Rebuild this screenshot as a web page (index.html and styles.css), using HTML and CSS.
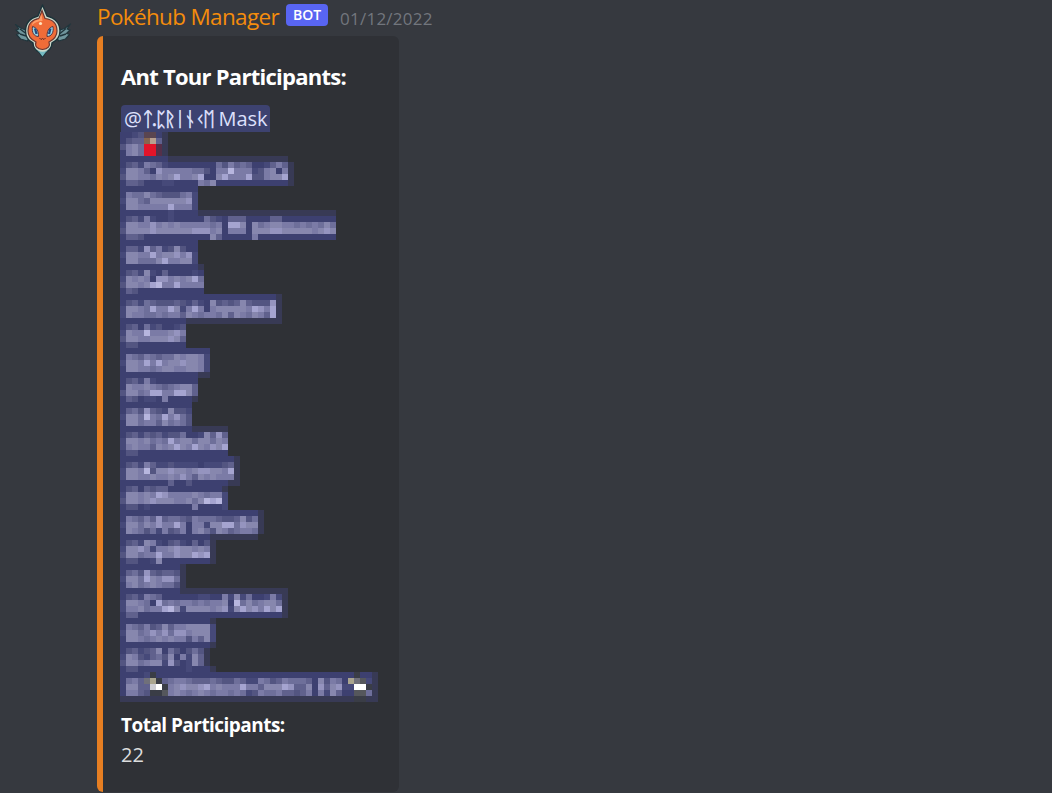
FILE: index.html
```
<!DOCTYPE html>
<html lang="en">
<head>
<meta charset="utf-8">
<title>Pokéhub Manager</title>
<link rel="stylesheet" href="styles.css">
</head>
<body>
<article class="message">
  <svg class="avatar" viewBox="0 0 90 70" aria-hidden="true">
    <g fill="#6f969d" stroke="#20353c" stroke-width="1.200" stroke-linejoin="round">
      <path d="M15.500 24.500l6 4 6 2 2 6-2 4.500-7-2-4-4.500 3-1-3.500-3.500 3-1z"/>
      <path d="M70.500 24l-6 4.500-6 2-2 6 2 4.500 7-2 4-4.500-3-1 3.500-3.500-3-1z"/>
    </g>
    <path d="M20 29l6 4.500M20 34l6 2M66 28.500l-6 5M66 34l-6 2" stroke="#20353c" stroke-width="1.400"/>
    <path fill="#cbd8c9" stroke="#1b343b" stroke-width="1.400" stroke-linejoin="round" d="M42.500 5l4.500 11c8 2 13 7.500 13 15 0 6-4 10-8 12 0 5-3 7.500-6.500 9.500l-3 4.500-3-4.500c-4-2-6.500-4.500-6.500-9.500-4-2-7.500-6-7.500-12 0-8 5-13 12.500-15z"/>
    <path fill="#74bbc2" d="M35 48c3 5 12 5 15 0l-4.500 4.500-3 4-3-4z"/>
    <path fill="#f06c38" stroke="#6d3630" stroke-width="1.200" d="M42 10.500l3 8c8 1 12 6 12 12.500 0 6-4 9-8 11 1.500 4-1 7-6.500 7.500-5.500-.5-8-3.500-6.500-7.500-4-2-8-5-8-11 0-7.500 5-11.500 11-12.500z"/>
    <path fill="#ff9d68" d="M41.500 14l1 7c-5 0-8 1.500-10.500 4.500 0-3.500 3-5.500 7-6z"/>
    <circle cx="40.500" cy="23.500" r="1.600" fill="#ffe5bf"/>
    <g fill="#9bd5e4" stroke="#59343c" stroke-width="1">
      <path d="M32.500 26.500c4.500 1 6 5 6 10-4.500 0-7-4-6-10z"/><path d="M53 26.500c-4.500 1-6 5-6 10 4.500 0 7-4 6-10z"/>
    </g>
    <path d="M35 28.500l1.500 5.500M50.500 28.500l-1.500 5.500" stroke="#204a80" stroke-width="2.200"/>
    <path d="M39.500 38l1.500 1.500 1.500-1 1.500 1 1.500-1.500" fill="none" stroke="#5c2a26"/>
  </svg>
  <div class="content">
    <header class="heading">
      <span class="author">Pokéhub Manager</span>
      <span class="badge">BOT</span>
      <time class="date">01/12/2022</time>
    </header>
    <section class="embed">
      <h2 class="title">Ant Tour Participants:</h2>
      <div class="mention">@<span class="runes">ᛏ.ᛈᚱᛁᚾᚲᛖ</span> Mask</div>
      <svg class="mosaic" id="mosaic" width="258" height="570" viewBox="0 0 43 95" shape-rendering="crispEdges" role="img"></svg>
      <h3 class="subtitle">Total Participants:</h3>
      <p class="total">22</p>
    </section>
  </div>
</article>
<script src="mosaic.js"></script>
</body>
</html>
```
FILE: styles.css
```
body {
  margin: 0;
  width: 1052px;
  height: 793px;
  overflow: hidden;
  background: #36393f;
  font-family: "Open Sans", "Noto Sans", sans-serif;
}
.message { display: flex; }
.avatar { width: 90px; height: 70px; flex: none; }
.content { padding-left: 7px; }
.heading { display: flex; height: 36px; }
.author {
  width: 189px;
  color: #f48c0c;
  font-size: 22.5px;
  font-weight: 500;
  line-height: 34px;
  letter-spacing: -0.65px;
  white-space: nowrap;
}
.badge {
  width: 42px;
  height: 22px;
  margin-top: 4px;
  border-radius: 4px;
  background: #5865f2;
  color: #fff;
  font-size: 14px;
  font-weight: 600;
  line-height: 22px;
  text-align: center;
}
.date {
  margin-left: 12px;
  color: #72767d;
  font-size: 17px;
  line-height: 37px;
  letter-spacing: 0.25px;
}
.embed {
  box-sizing: border-box;
  width: 302px;
  height: 756px;
  padding: 24px 18px 0;
  border-left: 6px solid #e67e22;
  border-radius: 6px;
  background: #2f3136;
}
.title {
  margin: 0;
  height: 45px;
  color: #fff;
  font-size: 22px;
  font-weight: 700;
  line-height: 33px;
  letter-spacing: -0.74px;
  white-space: nowrap;
}
.mention {
  width: 149px;
  height: 27px;
  border-radius: 4px 4px 0 0;
  background: #3d4270;
  color: #dee0fc;
  font-size: 20px;
  line-height: 27px;
  text-indent: 3px;
  white-space: nowrap;
}
.runes {
  letter-spacing: -2.25px;
  -webkit-text-stroke: 0.6px #dee0fc;
}
.mosaic { display: block; margin-left: -1px; }
.subtitle {
  margin: 8px 0 0;
  color: #fff;
  font-size: 19px;
  font-weight: 700;
  line-height: 30px;
  letter-spacing: -0.54px;
  white-space: nowrap;
}
.total {
  margin: 0;
  color: #dcddde;
  font-size: 20px;
  line-height: 30px;
}
```
FILE: mosaic.js
```
// Pixelated mention list: one character per cell, digits run from dark to light.
const colors = {
  0: '#3d4070', 1: '#464979', 2: '#535581', 3: '#60618d', 4: '#6e6f9a',
  5: '#7b7ba6', 6: '#8787ae', 7: '#9594bf', 8: '#a5a4d0', 9: '#b7b6de',
  e: '#383a55', m: '#5a4550', n: '#86654f', t: '#b8a090', r: '#e3142a',
  v: '#55304a', g: '#70707a', k: '#3a3d46', w: '#ffffff', y: '#aaa58f',
  l: '#cdcdd4', d: '#55575c'
};
const rows = [
  '0012mm0e', '0233nt3e', '2564rrve', '0564rrve',
  '00000000eeeeeeeeeeeeeeeeeeee',
  '0231543100000000425343001353e', '1665307555554420559555125605e',
  '2665546568556800685558225668e', '0332000110000546000000000000e',
  '0000000000000', '0544643222451', '1664366666671', '0665555585551',
  '0000000010000eeeeeeeeeeeeeeeeeeeeeee',
  '023151001000004210333000033000000000',
  '166557565655555450886064566554545464',
  '266667666666777560555066677666665676',
  '033200000000000630000050000000000000',
  '0000000000000', '0331735126200', '1665585667571', '0664446855661',
  '0000000000000e', '02316103000010', '16565077565684', '26656895585555', '03200000000000',
  '00000000000000000000000000e', '02314322232131062323632227e',
  '16654855861585056666658758e', '16554454553654554636546538e',
  '00000000000eeeeeeeeeeeeeeee', '02304120012', '16559555675', '26655666763', '02200000000',
  '000000000000000', '054354344656651', '166585856676651', '066554566556651',
  '0000000000000ee', '0231510000000', '0655654345663', '2664588558863', '032011050000e',
  '000000000000', '034273216221', '166495485742', '066455364542',
  '000000000000eeeeee', '023132312240016373', '166564548566466465', '156553656865865768', '022000000000000000',
  '0000000000000000000e', '0231531121111011123e', '1665926676656776658e', '1665565565753656555e', '000000003002000000ee',
  '02303233000000000e', '166565875555654551', '266567666556469891', '022010000000500001',
  '00000000000000000000000e', '05435373443254443223624e', '16646575585055166884766e', '06542415235056426534554e',
  '000000000000000eeeeeeee', '023165102310302e', '166751556766565e', '266455855766878e', '022001600000000e',
  '0000000000e', '0342732332e', '1664865774e', '0564565442e',
  '0000000000eeeeeeeeeeeeeeeeee', '023154300000011005161400151e',
  '166540845455454556094645664e', '155645589616666567168675868e', '033000000000000000000000000e',
  '000000000000000e', '0543523635566661', '1664575747756661', '0665456565525361', '000000000000000e',
  '02312360420242e', '16521342605163e', '26645661720163e', '022000000001000e',
  '00001k000000000000000000000000000000000k00e',
  '0453gyk345543334322431154235444306254' + '0ygd1e',
  '06633lwk56766785655585536668733607367' + '11wwke',
  '05532kkd56545654554541254453323505163' + '00dd4e',
  'eeeeeeeeeeeeeeeeeeeeeeeeeeeeeeeeeeeeeeekkee'
];
const svg = document.getElementById('mosaic');
rows.forEach((row, y) => [...row].forEach((c, x) => {
  const cell = document.createElementNS('http://www.w3.org/2000/svg', 'rect');
  cell.setAttribute('x', x);
  cell.setAttribute('y', y);
  cell.setAttribute('width', 1);
  cell.setAttribute('height', 1);
  cell.setAttribute('fill', colors[c]);
  svg.appendChild(cell);
}));
```
